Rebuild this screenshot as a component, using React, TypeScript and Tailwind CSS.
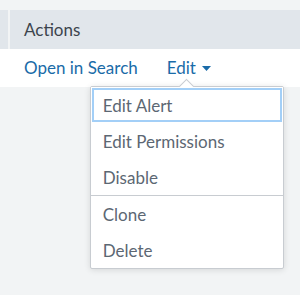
const MENU_GROUPS = [
  ['Edit Alert', 'Edit Permissions', 'Disable'],
  ['Clone', 'Delete'],
];

function Caret() {
  return (
    <svg width="9" height="5" viewBox="0 0 9 5" className="ml-[6px] mt-[1px]">
      <path d="M0 0h9L4.5 5z" fill="currentColor" />
    </svg>
  );
}

function EditMenu() {
  return (
    <div className="absolute left-[-77px] top-[31px] z-10 w-[194px] rounded-[2px] border border-[#c8ccd1] bg-white shadow-[0_1px_6px_rgba(0,0,0,0.12)]">
      <div className="absolute left-[90px] top-[-6px] h-[11px] w-[11px] rotate-45 border-l border-t border-[#c8ccd1] bg-white" />
      {MENU_GROUPS.map((group, gi) => (
        <div
          key={gi}
          className={gi > 0 ? 'border-t border-[#c8ccd1]' : ''}
        >
          {group.map((label) => (
            <div
              key={label}
              className={
                'relative flex h-[36px] items-center pl-[12px] text-[17px] text-[#5c6773]' +
                (label === 'Edit Alert'
                  ? ' shadow-[inset_0_0_0_1px_#ffffff,inset_0_0_0_3px_#a3cff7]'
                  : '')
              }
            >
              {label}
            </div>
          ))}
        </div>
      ))}
    </div>
  );
}

export default function App() {
  return (
    <div className="relative h-[295px] w-[300px] overflow-hidden bg-[#f2f4f5] pt-[10px] font-['Lato',sans-serif]">
      <div className="flex h-[39px] bg-[#e1e6eb]">
        <div className="w-[8px]" />
        <div className="w-[2px] bg-[#f2f4f5]" />
        <div className="flex flex-1 items-center pl-[14px] text-[17px] text-[#3c444d]">
          Actions
        </div>
      </div>
      <div className="flex h-[38px] items-center bg-white pl-[24px] text-[17px] text-[#1a6ba8]">
        <span>Open in Search</span>
        <div className="relative ml-[29px] flex items-center">
          <span>Edit</span>
          <Caret />
          <EditMenu />
        </div>
      </div>
    </div>
  );
}
